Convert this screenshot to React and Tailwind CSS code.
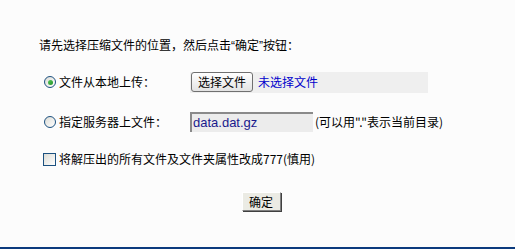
import React from "react";

const cjk = { fontFamily: '"Noto Sans CJK SC", "Liberation Sans", sans-serif' };
const latin = { fontFamily: '"Liberation Sans", Arial, sans-serif' };

function Radio({ checked }) {
  return (
    <span className="flex h-[12px] w-[12px] shrink-0 items-center justify-center rounded-full border border-[#1c5180] bg-gradient-to-br from-[#dcdcd6] to-white">
      {checked && <span className="h-[5px] w-[5px] rounded-full bg-gradient-to-br from-[#55c85a] to-[#219125]" />}
    </span>
  );
}

function Checkbox() {
  return (
    <span className="block h-[13px] w-[13px] shrink-0 border border-[#1c5180] bg-gradient-to-br from-[#dcdcd6] to-white" />
  );
}

export default function App() {
  return (
    <div className="flex h-[249px] w-full flex-col border-b-2 border-[#0b3a7d] bg-[#fcfcfc] text-[12px] text-black" style={cjk}>
      <p className="ml-[39px] mt-[37px] h-[16px] leading-[16px]">
        请先选择压缩文件的位置，然后点击<span style={latin}>“</span>确定<span style={latin}>”</span>按钮：
      </p>

      <div className="ml-[44px] mt-[18px] flex h-[22px] items-center">
        <div className="flex w-[146px] items-center gap-[3px]">
          <Radio checked />
          <span className="leading-[16px]">文件从本地上传：</span>
        </div>
        <div className="flex h-[21px] w-[238px] items-center bg-[#efefef]">
          <span className="ml-[1px] flex h-[20px] w-[62px] items-center justify-center rounded-[3px] border border-[#707070] bg-gradient-to-b from-white to-[#e3e3e3] leading-[16px]">
            选择文件
          </span>
          <span className="ml-[5px] leading-[16px] text-[#0000cc]">未选择文件</span>
        </div>
      </div>

      <div className="ml-[44px] mt-[19px] flex h-[20px] items-center">
        <div className="flex w-[146px] items-center gap-[3px]">
          <Radio />
          <span className="leading-[16px]">指定服务器上文件：</span>
        </div>
        <div
          className="flex h-[20px] w-[123px] items-center border-l-2 border-t-2 border-[#8a8a8a] bg-[#ececec] pl-[1px] text-[13px] text-[#1a1a8c]"
          style={latin}
        >
          data.dat.gz
        </div>
        <span className="ml-[2px] leading-[16px]">(可以用"."表示当前目录)</span>
      </div>

      <div className="ml-[43px] mt-[19px] flex h-[16px] items-center gap-[3px]">
        <Checkbox />
        <span className="leading-[16px]">将解压出的所有文件及文件夹属性改成777(慎用)</span>
      </div>

      <div className="mt-[25px] flex justify-center">
        <span className="ml-[7px] flex h-[19px] w-[39px] items-center justify-center border border-b-[#808080] border-l-white border-r-[#808080] border-t-white bg-[#ebebe4] leading-[16px] shadow-[1px_1px_0_#404040]">
          确定
        </span>
      </div>
    </div>
  );
}
